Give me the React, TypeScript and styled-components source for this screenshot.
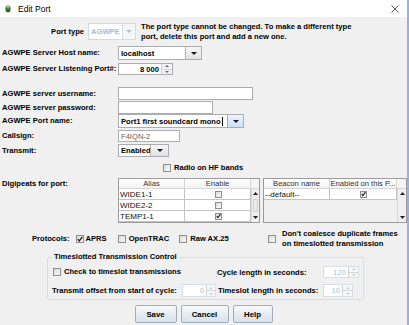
import React from "react";
import styled, { createGlobalStyle } from "styled-components";

const GlobalStyle = createGlobalStyle`
  html, body {
    margin: 0;
    padding: 0;
    background: #f0f0f0;
  }
  body {
    font-family: "Liberation Sans", Arial, sans-serif;
    font-size: 7.6px;
    color: #000;
  }
`;

const Window = styled.div`
  width: 409px;
  height: 325px;
  box-sizing: border-box;
  border-right: 2px solid #8fb5de;
  background: #f0f0f0;
  display: flex;
  flex-direction: column;
  overflow: hidden;
`;

const TitleBar = styled.div`
  height: 17px;
  flex-shrink: 0;
  background: #ffffff;
  display: flex;
  align-items: center;
  padding: 0 8px 0 5px;
`;

const TitleText = styled.span`
  flex: 1;
  margin-left: 7px;
  font-size: 8.5px;
  color: #000;
`;

const Row = styled.div<{ $mt: number; $h: number; $pl?: number; $top?: boolean }>`
  display: flex;
  align-items: ${(p) => (p.$top ? "flex-start" : "center")};
  margin-top: ${(p) => p.$mt}px;
  height: ${(p) => p.$h}px;
  padding-left: ${(p) => p.$pl ?? 0}px;
  flex-shrink: 0;
`;

const Label = styled.div<{ $w?: number; $right?: boolean; $pt?: number }>`
  width: ${(p) => p.$w ?? 118}px;
  flex-shrink: 0;
  box-sizing: border-box;
  padding-left: ${(p) => (p.$right ? 0 : 2)}px;
  padding-top: ${(p) => p.$pt ?? 0}px;
  text-align: ${(p) => (p.$right ? "right" : "left")};
  font-weight: bold;
  white-space: nowrap;
  line-height: 10px;
`;

const Note = styled.div`
  margin-left: 5px;
  font-weight: bold;
  line-height: 10px;
  white-space: nowrap;
`;

const TextField = styled.div<{ $w: number; $bold?: boolean; $muted?: boolean }>`
  width: ${(p) => p.$w}px;
  height: 100%;
  box-sizing: border-box;
  border: 1px solid #abadb3;
  background: #ffffff;
  padding: 0 2px;
  display: flex;
  align-items: center;
  font-weight: ${(p) => (p.$bold ? "bold" : "normal")};
  color: ${(p) => (p.$muted ? "#5e5e5e" : "#000")};
  white-space: nowrap;
  overflow: hidden;
`;

const Caret = styled.span`
  display: inline-block;
  width: 1px;
  height: 9px;
  background: #000;
  margin-left: 1px;
`;

const ComboWrap = styled.div<{ $disabled?: boolean }>`
  display: flex;
  height: 100%;
  box-sizing: border-box;
  border: 1px solid ${(p) => (p.$disabled ? "#d3dae2" : "#abadb3")};
  background: #ffffff;
`;

const ComboText = styled.div<{ $w: number; $disabled?: boolean }>`
  width: ${(p) => p.$w}px;
  padding: 0 1px 0 2px;
  box-sizing: border-box;
  display: flex;
  align-items: center;
  font-weight: bold;
  white-space: nowrap;
  overflow: hidden;
  color: ${(p) => (p.$disabled ? "#a9bccf" : "#000")};
`;

const ArrowButton = styled.div<{ $w: number; $tone: "plain" | "focus" | "disabled" }>`
  width: ${(p) => p.$w}px;
  display: flex;
  align-items: center;
  justify-content: center;
  border-left: 1px solid
    ${(p) => (p.$tone === "focus" ? "#7eb4ea" : p.$tone === "disabled" ? "#d3dae2" : "#b5b5b5")};
  background: ${(p) =>
    p.$tone === "focus"
      ? "linear-gradient(#eaf4fc, #c9e2f7)"
      : p.$tone === "disabled"
      ? "#f4f6f8"
      : "linear-gradient(#f6f6f6, #e2e2e2)"};
`;

const SpinWrap = styled.div<{ $disabled?: boolean }>`
  display: flex;
  height: 100%;
  box-sizing: border-box;
  border: 1px solid ${(p) => (p.$disabled ? "#d8dee5" : "#abadb3")};
  background: #ffffff;
`;

const SpinField = styled.div<{ $w: number; $disabled?: boolean }>`
  width: ${(p) => p.$w}px;
  padding-right: 2px;
  box-sizing: border-box;
  display: flex;
  align-items: center;
  justify-content: flex-end;
  font-weight: ${(p) => (p.$disabled ? "normal" : "bold")};
  color: ${(p) => (p.$disabled ? "#aabdd0" : "#000")};
`;

const SpinButtons = styled.div<{ $w: number }>`
  width: ${(p) => p.$w}px;
  display: flex;
  flex-direction: column;
  border-left: 1px solid #d0d0d0;
`;

const SpinHalf = styled.div<{ $disabled?: boolean; $last?: boolean }>`
  flex: 1;
  display: flex;
  align-items: center;
  justify-content: center;
  background: ${(p) => (p.$disabled ? "#f6f7f9" : "#f1f1f1")};
  border-bottom: ${(p) => (p.$last ? "none" : "1px solid #d6d6d6")};
`;

const Box = styled.span<{ $size?: number }>`
  width: ${(p) => p.$size ?? 8}px;
  height: ${(p) => p.$size ?? 8}px;
  box-sizing: border-box;
  flex-shrink: 0;
  border: 1px solid #8e8f8f;
  background: linear-gradient(135deg, #dadada, #fafafa);
  display: inline-flex;
  align-items: center;
  justify-content: center;
`;

const CheckItem = styled.div<{ $ml?: number; $gap?: number }>`
  display: flex;
  align-items: center;
  gap: ${(p) => p.$gap ?? 3}px;
  margin-left: ${(p) => p.$ml ?? 0}px;
  font-weight: bold;
  white-space: nowrap;
  line-height: 10px;
`;

const ProtocolGroup = styled.div`
  display: flex;
  align-items: center;
  margin-left: 32px;
  width: 236px;
  flex-shrink: 0;
`;

const ScrollPane = styled.div<{ $w: number; $ml?: number }>`
  width: ${(p) => p.$w}px;
  height: 45px;
  margin-left: ${(p) => p.$ml ?? 0}px;
  box-sizing: border-box;
  border: 1px solid #9c9c9c;
  display: flex;
  flex-direction: column;
  background: #f0f0f0;
`;

const HeaderRow = styled.div<{ $cols: string }>`
  display: grid;
  grid-template-columns: ${(p) => p.$cols};
  height: 10px;
`;

const HeaderCell = styled.div`
  box-sizing: border-box;
  border-right: 1px solid #d5d5d5;
  border-bottom: 1px solid #d5d5d5;
  background: linear-gradient(#ffffff, #f2f2f2);
  color: #333;
  text-align: center;
  line-height: 9px;
  white-space: nowrap;
  overflow: hidden;
`;

const Corner = styled.div`
  border-bottom: 1px solid #d5d5d5;
  background: #f4f4f4;
`;

const BodyArea = styled.div`
  flex: 1;
  display: flex;
`;

const Viewport = styled.div`
  flex: 1;
  display: flex;
  flex-direction: column;
`;

const TableRow = styled.div<{ $cols: string }>`
  display: grid;
  grid-template-columns: ${(p) => p.$cols};
  height: 11px;
`;

const Cell = styled.div<{ $center?: boolean }>`
  box-sizing: border-box;
  background: #ffffff;
  border-right: 1px solid #c4c4c4;
  border-bottom: 1px solid #c4c4c4;
  padding-left: 1px;
  display: flex;
  align-items: center;
  justify-content: ${(p) => (p.$center ? "center" : "flex-start")};
  white-space: nowrap;
  color: #111;
  font-size: 8px;
`;

const ScrollBar = styled.div<{ $w: number }>`
  width: ${(p) => p.$w}px;
  display: flex;
  flex-direction: column;
  border-left: 1px solid #d8d8d8;
  background: #efefef;
`;

const ScrollBtn = styled.div`
  height: 9px;
  display: flex;
  align-items: center;
  justify-content: center;
`;

const ScrollTrack = styled.div`
  flex: 1;
  display: flex;
  padding: 1px 1px;
`;

const Thumb = styled.div`
  flex: 1;
  border: 1px solid #c9d3dd;
  background: #e7ebef;
`;

const Coalesce = styled.div`
  display: flex;
  align-items: center;
  gap: 6px;
  font-weight: bold;
  line-height: 10px;
  white-space: nowrap;
`;

const GroupBox = styled.fieldset`
  margin: 3px 0 0 47px;
  width: 314px;
  height: 48px;
  box-sizing: border-box;
  padding: 0 4px 2px 4px;
  border: 1px solid #d5dfe5;
  border-radius: 2px;
  flex-shrink: 0;
`;

const Legend = styled.legend`
  padding: 0 2px;
  margin-left: 0;
  font-weight: bold;
  line-height: 10px;
  color: #000;
`;

const GroupGrid = styled.div`
  display: grid;
  grid-template-columns: 130px 35px 106px auto;
  grid-template-rows: 12px 13px;
  row-gap: 6px;
  margin-top: 4px;
  align-items: center;
`;

const GridText = styled.div<{ $ml?: number }>`
  font-weight: bold;
  white-space: nowrap;
  margin-left: ${(p) => p.$ml ?? 0}px;
`;

const GridField = styled.div<{ $span?: number }>`
  height: 100%;
  display: flex;
  grid-column: ${(p) => (p.$span ? `span ${p.$span}` : "auto")};
  align-items: center;
`;

const ButtonRow = styled.div`
  display: flex;
  justify-content: center;
  gap: 4px;
  margin-top: 5px;
  height: 18px;
  flex-shrink: 0;
`;

const Button = styled.button<{ $w: number }>`
  width: ${(p) => p.$w}px;
  height: 18px;
  padding: 0;
  font-family: inherit;
  font-size: 7.8px;
  font-weight: bold;
  color: #000;
  border: 1px solid #9eadbd;
  border-radius: 2px;
  background: linear-gradient(#f8fafc, #e6ecf2 50%, #d9e2eb);
`;

function Tri({ up, color = "#222", w = 7, h = 4 }: { up?: boolean; color?: string; w?: number; h?: number }) {
  const pts = up ? `0,${h} ${w / 2},0 ${w},${h}` : `0,0 ${w},0 ${w / 2},${h}`;
  return (
    <svg width={w} height={h} viewBox={`0 0 ${w} ${h}`}>
      <polygon points={pts} fill={color} />
    </svg>
  );
}

function Tick() {
  return (
    <svg width="6" height="6" viewBox="0 0 6 6">
      <polyline points="0.8,3.2 2.3,5 5.4,0.8" fill="none" stroke="#222" strokeWidth="1.3" />
    </svg>
  );
}

function CheckBox({ checked, size }: { checked?: boolean; size?: number }) {
  return <Box $size={size}>{checked && <Tick />}</Box>;
}

function Combo({
  text,
  w,
  aw = 15,
  tone = "plain",
  caret,
}: {
  text: string;
  w: number;
  aw?: number;
  tone?: "plain" | "focus" | "disabled";
  caret?: boolean;
}) {
  const disabled = tone === "disabled";
  return (
    <ComboWrap $disabled={disabled}>
      <ComboText $w={w} $disabled={disabled}>
        {text}
        {caret && <Caret />}
      </ComboText>
      <ArrowButton $w={aw} $tone={tone}>
        <Tri color={disabled ? "#b3c3d3" : "#1a1a1a"} w={6} h={3} />
      </ArrowButton>
    </ComboWrap>
  );
}

function Spinner({ value, w, bw, disabled }: { value: string; w: number; bw: number; disabled?: boolean }) {
  const c = disabled ? "#c4ccd4" : "#6a6a6a";
  return (
    <SpinWrap $disabled={disabled}>
      <SpinField $w={w} $disabled={disabled}>
        {value}
      </SpinField>
      <SpinButtons $w={bw}>
        <SpinHalf $disabled={disabled}>
          <Tri up color={c} w={4} h={2} />
        </SpinHalf>
        <SpinHalf $disabled={disabled} $last>
          <Tri color={c} w={4} h={2} />
        </SpinHalf>
      </SpinButtons>
    </SpinWrap>
  );
}

function VScroll({ w, thumb }: { w: number; thumb?: boolean }) {
  return (
    <ScrollBar $w={w}>
      <ScrollBtn>
        <Tri up w={5} h={3} />
      </ScrollBtn>
      <ScrollTrack>{thumb && <Thumb />}</ScrollTrack>
      <ScrollBtn>
        <Tri w={5} h={3} />
      </ScrollBtn>
    </ScrollBar>
  );
}

const digipeats = [
  { alias: "WIDE1-1", enabled: false },
  { alias: "WIDE2-2", enabled: false },
  { alias: "TEMP1-1", enabled: true },
];

export default function App() {
  return (
    <Window>
      <GlobalStyle />
      <TitleBar>
        <svg width="6" height="9" viewBox="0 0 6 9">
          <ellipse cx="3" cy="5" rx="2.6" ry="3.6" fill="#3f6b3a" />
          <ellipse cx="3" cy="3" rx="1.4" ry="1.6" fill="#9fc47a" />
        </svg>
        <TitleText>Edit Port</TitleText>
        <svg width="8" height="8" viewBox="0 0 8 8">
          <path d="M0.5 0.5 L7.5 7.5 M7.5 0.5 L0.5 7.5" stroke="#444" strokeWidth="0.9" />
        </svg>
      </TitleBar>

      <Row $mt={6} $h={17}>
        <Label $w={84} $right>
          Port type
        </Label>
        <div style={{ marginLeft: 4, height: "100%" }}>
          <Combo text="AGWPE" w={33} aw={12} tone="disabled" />
        </div>
        <Note>
          The port type cannot be changed. To make a different type
          <br />
          port, delete this port and add a new one.
        </Note>
      </Row>

      <Row $mt={6} $h={14}>
        <Label>AGWPE Server Host name:</Label>
        <Combo text="localhost" w={66} />
      </Row>

      <Row $mt={3} $h={12}>
        <Label>AGWPE Server Listening Port#:</Label>
        <Spinner value="8 000" w={42} bw={10} />
      </Row>

      <Row $mt={12} $h={13}>
        <Label>AGWPE server username:</Label>
        <TextField $w={135} />
      </Row>

      <Row $mt={1} $h={13}>
        <Label>AGWPE server password:</Label>
        <TextField $w={95} />
      </Row>

      <Row $mt={0} $h={14}>
        <Label>AGWPE Port name:</Label>
        <Combo text="Port1 first soundcard mono" w={108} tone="focus" caret />
      </Row>

      <Row $mt={2} $h={12}>
        <Label>Callsign:</Label>
        <TextField $w={62} $muted>
          F4IQN-2
        </TextField>
      </Row>

      <Row $mt={2} $h={13}>
        <Label>Transmit:</Label>
        <Combo text="Enabled" w={31} aw={17} />
      </Row>

      <Row $mt={6} $h={10} $pl={163}>
        <CheckItem>
          <CheckBox />
          Radio on HF bands
        </CheckItem>
      </Row>

      <Row $mt={5} $h={45} $top>
        <Label $pt={1}>Digipeats for port:</Label>
        <ScrollPane $w={142}>
          <HeaderRow $cols="66px 66px 1fr">
            <HeaderCell>Alias</HeaderCell>
            <HeaderCell>Enable</HeaderCell>
            <Corner />
          </HeaderRow>
          <BodyArea>
            <Viewport>
              {digipeats.map((d) => (
                <TableRow key={d.alias} $cols="66px 66px">
                  <Cell>{d.alias}</Cell>
                  <Cell $center>
                    <CheckBox checked={d.enabled} size={7} />
                  </Cell>
                </TableRow>
              ))}
            </Viewport>
            <VScroll w={8} thumb />
          </BodyArea>
        </ScrollPane>
        <ScrollPane $w={144} $ml={3}>
          <HeaderRow $cols="66px 67px 1fr">
            <HeaderCell>Beacon name</HeaderCell>
            <HeaderCell>Enabled on this P...</HeaderCell>
            <Corner />
          </HeaderRow>
          <BodyArea>
            <Viewport>
              <TableRow $cols="66px 67px">
                <Cell>--default--</Cell>
                <Cell $center>
                  <CheckBox checked size={7} />
                </Cell>
              </TableRow>
            </Viewport>
            <VScroll w={9} />
          </BodyArea>
        </ScrollPane>
      </Row>

      <Row $mt={6} $h={20}>
        <ProtocolGroup>
          <CheckItem>Protocols:</CheckItem>
          <CheckItem $ml={6} $gap={2}>
            <CheckBox checked />
            APRS
          </CheckItem>
          <CheckItem $ml={11}>
            <CheckBox />
            OpenTRAC
          </CheckItem>
          <CheckItem $ml={10}>
            <CheckBox />
            Raw AX.25
          </CheckItem>
        </ProtocolGroup>
        <Coalesce>
          <CheckBox />
          <div>
            Don't coalesce duplicate frames
            <br />
            on timeslotted transmission
          </div>
        </Coalesce>
      </Row>

      <GroupBox>
        <Legend>Timeslotted Transmission Control</Legend>
        <GroupGrid>
          <GridField $span={2}>
            <CheckItem $ml={1}>
              <CheckBox />
              Check to timeslot transmissions
            </CheckItem>
          </GridField>
          <GridText>Cycle length in seconds:</GridText>
          <GridField>
            <Spinner value="120" w={24} bw={9} disabled />
          </GridField>
          <GridText>Transmit offset from start of cycle:</GridText>
          <GridField>
            <Spinner value="0" w={23} bw={8} disabled />
          </GridField>
          <GridText $ml={1}>Timeslot length in seconds:</GridText>
          <GridField>
            <Spinner value="10" w={18} bw={9} disabled />
          </GridField>
        </GroupGrid>
      </GroupBox>

      <ButtonRow>
        <Button $w={42}>Save</Button>
        <Button $w={48}>Cancel</Button>
        <Button $w={40}>Help</Button>
      </ButtonRow>
    </Window>
  );
}
